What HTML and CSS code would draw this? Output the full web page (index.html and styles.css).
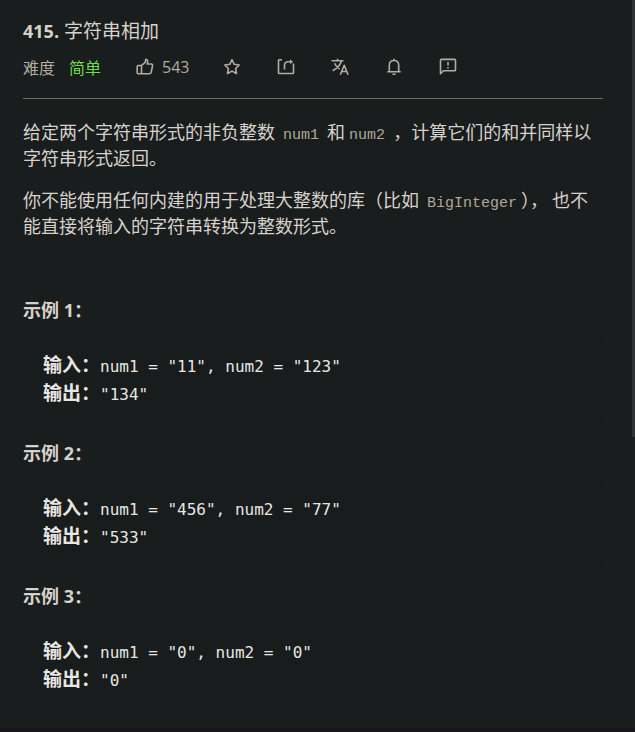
FILE: index.html
```html
<!DOCTYPE html>
<html lang="zh-CN">
<head>
  <meta charset="UTF-8" />
  <meta name="viewport" content="width=device-width,initial-scale=1.0" />
  <title>415. 字符串相加</title>
  <link rel="stylesheet" href="styles.css">
</head>
<body>
  <main class="problem">
    <h1 class="problem-title"><b>415.</b> 字符串相加</h1>
    <div class="meta">
      <span class="meta-label">难度</span>
      <span class="difficulty">简单</span>
      <button class="action like" type="button" aria-label="点赞 543">
        <svg viewBox="0 0 18 18"><path d="M5.5 7.5v8.2H2.2Q1.2 15.7 1.2 14.7V8.5Q1.2 7.5 2.2 7.5H5.5L8.6 4.8Q9.8 3.7 9.8 1.3Q12.8 1.9 11.1 6H15.2Q16.9 6 16.5 7.8L15.2 14.1Q14.9 15.7 13.2 15.7H5.5"/></svg>
        <span>543</span>
      </button>
      <div class="actions">
        <button class="action" type="button" aria-label="收藏">
          <svg viewBox="0 0 18 18"><path d="M9 1.7l2.2 4.6 5 .7-3.6 3.5.9 5L9 13.1l-4.5 2.4.9-5L1.8 7l5-.7z"/></svg>
        </button>
        <button class="action" type="button" aria-label="分享">
          <svg viewBox="0 0 18 18"><path d="M5 1.7H2.2Q1.5 1.7 1.5 2.4V14.8Q1.5 15.5 2.2 15.5H15.8Q16.5 15.5 16.5 14.8V5.5M7.5 11.5V7.5Q7.5 3.7 11.3 3.7H15.2"/><path class="solid" d="M13 1.2L16 3.7L13 6.2Z"/></svg>
        </button>
        <button class="action" type="button" aria-label="切换语言">
          <svg viewBox="0 0 18 18"><path d="M.5 2.8H12.5M6.5 .7V2.8M10.5 2.8Q8.9 9 1.7 12.7M3.5 5.3Q5.1 8.9 8.7 11M9.3 16.7L13.2 7.3L17.1 16.7M10.6 13.5H15.8"/></svg>
        </button>
        <button class="action" type="button" aria-label="订阅">
          <svg viewBox="0 0 18 18"><path d="M2.3 13.7H15.7M4.3 13.7V7.2Q4.3 2.5 9 2.5Q13.7 2.5 13.7 7.2V13.7M9 .7V2.5M7.5 16.2H10.5"/></svg>
        </button>
        <button class="action" type="button" aria-label="反馈">
          <svg viewBox="0 0 18 18"><path d="M1.5 15.7V2.2Q1.5 1.4 2.3 1.4H15.7Q16.5 1.4 16.5 2.2V11.9Q16.5 12.7 15.7 12.7H4.5ZM9 3.9V7.5M9 9V10.6"/></svg>
        </button>
      </div>
    </div>

    <div class="content">
      <p>给定两个字符串形式的非负整数 <code>num1</code> 和<code>num2</code> ，计算它们的和并同样以字符串形式返回。</p>
      <p>你不能使用任何内建的用于处理大整数的库（比如 <code>BigInteger</code>）， 也不能直接将输入的字符串转换为整数形式。</p>
    </div>

    <section class="example">
      <h2>示例 1：</h2>
      <pre><strong>输入：</strong>num1 = "11", num2 = "123"
<strong>输出：</strong>"134"</pre>
    </section>
    <section class="example">
      <h2>示例 2：</h2>
      <pre><strong>输入：</strong>num1 = "456", num2 = "77"
<strong>输出：</strong>"533"</pre>
    </section>
    <section class="example">
      <h2>示例 3：</h2>
      <pre><strong>输入：</strong>num1 = "0", num2 = "0"
<strong>输出：</strong>"0"</pre>
    </section>
  </main>
  <div class="scrollbar"><div class="thumb"></div></div>
</body>
</html>
```
FILE: styles.css
```css
* {
  box-sizing: border-box;
}
body {
  margin: 0;
  min-height: 100vh;
  display: flex;
  background: #1a1d1e;
  border-bottom: 4px solid #1b141d;
  color: #d6d2cb;
  font-family: "Open Sans", "Noto Sans CJK SC", sans-serif;
}
.problem {
  flex: 1;
  min-width: 0;
  padding: 18px 29px 0 23px;
}
.problem-title {
  margin: 0;
  font-size: 19px;
  font-weight: 400;
  line-height: 26px;
}
.problem-title b {
  font-size: 18px;
}
.meta {
  display: flex;
  align-items: center;
  height: 55px;
  padding-bottom: 8px;
  border-bottom: 1px solid #736b5e;
  font-size: 16px;
  color: #b2aca2;
}
.difficulty {
  margin-left: 14px;
  color: #6fdc4b;
}
.like {
  margin-left: 35px;
}
.actions {
  display: flex;
  align-items: center;
  gap: 36px;
  margin-left: 34px;
}
.action {
  display: flex;
  align-items: center;
  gap: 8px;
  padding: 0;
  border: none;
  background: none;
  color: inherit;
  font: inherit;
  cursor: pointer;
}
.action svg {
  width: 18px;
  height: 18px;
  fill: none;
  stroke: currentColor;
  stroke-width: 1.6;
  stroke-linejoin: round;
}
.action .solid {
  fill: currentColor;
  stroke: none;
}
.content {
  padding-top: 19px;
  font-family: "Noto Sans CJK SC", sans-serif;
  font-size: 18px;
  line-height: 26px;
}
.content p {
  margin: 0 0 16px;
}
.content code {
  padding: 0 4px;
  border-radius: 3px;
  background: #191c1c;
  color: #b0a898;
  font-family: "Liberation Mono", monospace;
  font-size: 15px;
  line-height: 16px;
}
.content + .example {
  margin-top: 59px;
}
.example h2 {
  margin: 0 0 16px;
  font-size: 18px;
  font-weight: 700;
  line-height: 26px;
}
.example pre {
  margin: 0 0 18px;
  padding: 14px 20px 13px;
  border-radius: 4px;
  background: #191c1c;
  color: #e8e6e3;
  font-family: "DejaVu Sans Mono", "Noto Sans CJK SC", monospace;
  font-size: 16px;
  line-height: 28px;
  white-space: pre-wrap;
}
.example strong {
  font-family: "Noto Sans CJK SC", sans-serif;
  font-size: 19px;
  line-height: 20px;
}
.scrollbar {
  width: 3px;
  background: #1b1e1f;
}
.thumb {
  height: 60%;
  background: #303335;
}
```
